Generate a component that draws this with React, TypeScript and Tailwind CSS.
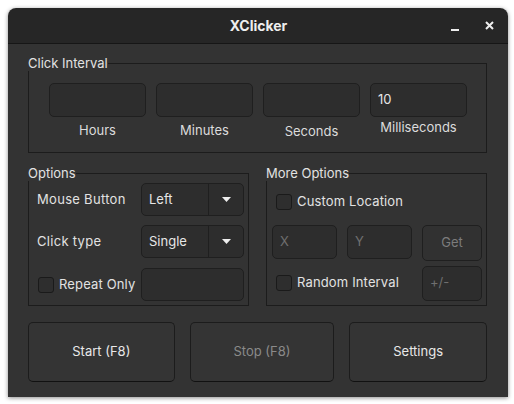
import type { ReactNode } from "react";

const font = { fontFamily: "Inter, 'Noto Sans', sans-serif" };

function Group({ title, className, children }: { title: string; className?: string; children: ReactNode }) {
  return (
    <fieldset className={`border border-[#1c1c1c] px-0 pb-0 pt-0 m-0 ${className ?? ""}`}>
      <legend className="px-0 ml-[-1px] text-[13px] leading-[15px] text-[#e2e2e2]">{title}</legend>
      {children}
    </fieldset>
  );
}

function Entry({ w, h = "h-[34px]", value, placeholder }: { w: string; h?: string; value?: string; placeholder?: string }) {
  return (
    <div className={`${w} ${h} rounded-[5px] border border-[#1f1f1f] bg-[#2d2d2d] flex items-center px-[7px] text-[13px]`}>
      {value && <span className="text-[#e6e6e6]">{value}</span>}
      {placeholder && <span className="text-[#6f6f6f]">{placeholder}</span>}
    </div>
  );
}

function Check({ label }: { label: string }) {
  return (
    <div className="flex items-center gap-[5px]">
      <div className="w-[16px] h-[16px] rounded-[3px] border border-[#1a1a1a] bg-[#2e2e2e]" />
      <span className="text-[13px] tracking-[0.15px] text-[#e2e2e2]">{label}</span>
    </div>
  );
}

function Select({ value }: { value: string }) {
  return (
    <div className="w-[103px] h-[33px] rounded-[5px] border border-[#1f1f1f] bg-[#2d2d2d] flex text-[13px] text-[#e6e6e6]">
      <div className="flex-1 flex items-center pl-[7px]">{value}</div>
      <div className="w-[35px] border-l border-[#1f1f1f] flex items-center justify-center">
        <svg width="9" height="5" viewBox="0 0 9 5">
          <path d="M0 0 L9 0 L4.5 5 Z" fill="#eeeeee" />
        </svg>
      </div>
    </div>
  );
}

function Btn({ w, label, disabled }: { w: string; label: string; disabled?: boolean }) {
  return (
    <div
      className={`${w} h-[60px] rounded-[5px] border border-[#1c1c1c] border-b-[#111] bg-[#343434] flex items-center justify-center text-[13px] ${
        disabled ? "text-[#8a8a8a]" : "text-[#e8e8e8]"
      }`}
    >
      {label}
    </div>
  );
}

export default function App() {
  return (
    <div className="w-[514px] h-[404px] bg-white pt-[8px] pl-[8px]" style={font}>
      <div className="w-[500px] h-[389px] rounded-t-[8px] overflow-hidden shadow-[0_1px_4px_rgba(0,0,0,0.45)] flex flex-col">
        <div className="h-[36px] bg-[#262626] border-b border-[#161616] flex items-center relative">
          <div className="flex-1 text-center text-[14px] font-bold text-[#eeeeee] pl-[1px]">XClicker</div>
          <div className="absolute right-[14px] top-0 h-full flex items-center gap-[26px]">
            <div className="w-[8px] h-[2px] bg-[#eeeeee] mt-[8px]" />
            <svg width="9" height="9" viewBox="0 0 9 9">
              <path d="M1 1 L8 8 M8 1 L1 8" stroke="#eeeeee" strokeWidth="2" />
            </svg>
          </div>
        </div>
        <div className="flex-1 bg-[#333333] pl-[20px] pr-[21px] pt-[12px] flex flex-col">
          <Group title="Click Interval" className="h-[97px]">
            <div className="flex gap-[10px] pl-[20px] pt-[12px]">
              {[
                ["Hours", "", "mt-[6px]"],
                ["Minutes", "", "mt-[6px]"],
                ["Seconds", "", "mt-[7px]"],
                ["Milliseconds", "10", "mt-[3px]"],
              ].map(([label, value, mt]) => (
                <div key={label} className="flex flex-col items-center">
                  <Entry w="w-[97px]" value={value} />
                  <div className={`${mt} text-[13px] leading-[15px] text-[#dcdcdc]`}>{label}</div>
                </div>
              ))}
            </div>
          </Group>
          <div className="flex gap-[17px] mt-[13px]">
            <Group title="Options" className="w-[221px] h-[140px]">
              <div className="flex flex-col gap-[9px] pl-[8px] pt-[2px]">
                <div className="flex items-center">
                  <div className="w-[104px] text-[13px] tracking-[0.3px] text-[#e2e2e2]">Mouse Button</div>
                  <Select value="Left" />
                </div>
                <div className="flex items-center">
                  <div className="w-[104px] text-[13px] tracking-[0.3px] text-[#e2e2e2]">Click type</div>
                  <Select value="Single" />
                </div>
                <div className="flex items-center mt-[1px]">
                  <div className="w-[104px] pl-[1px]">
                    <Check label="Repeat Only" />
                  </div>
                  <Entry w="w-[103px]" h="h-[33px]" />
                </div>
              </div>
            </Group>
            <Group title="More Options" className="w-[221px] h-[140px]">
              <div className="flex flex-col pl-[5px] pt-[11px]">
                <div className="pl-[4px]">
                  <Check label="Custom Location" />
                </div>
                <div className="flex gap-[10px] mt-[13px]">
                  <Entry w="w-[65px]" placeholder="X" />
                  <Entry w="w-[65px]" placeholder="Y" />
                  <div className="w-[60px] h-[36px] rounded-[5px] border border-[#1f1f1f] bg-[#313131] flex items-center justify-center text-[13px] text-[#7c7c7c]">
                    Get
                  </div>
                </div>
                <div className="flex items-center justify-between mt-[5px] pr-[4px]">
                  <div className="pl-[4px]">
                    <Check label="Random Interval" />
                  </div>
                  <Entry w="w-[60px]" h="h-[35px]" placeholder="+/-" />
                </div>
              </div>
            </Group>
          </div>
          <div className="flex gap-[15px] mt-[16px]">
            <Btn w="w-[147px]" label="Start (F8)" />
            <Btn w="w-[145px]" label="Stop (F8)" disabled />
            <Btn w="w-[138px]" label="Settings" />
          </div>
        </div>
      </div>
    </div>
  );
}
